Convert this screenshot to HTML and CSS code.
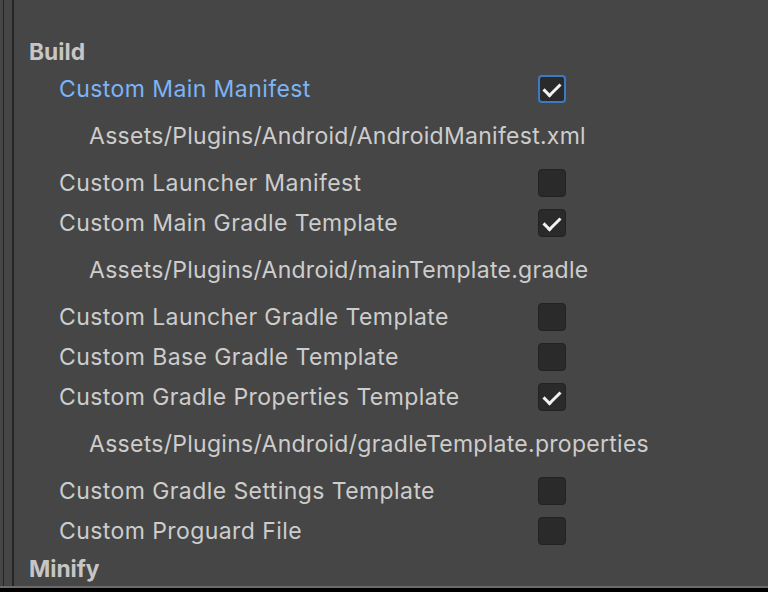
FILE: index.html
```html
<!DOCTYPE html>
<html lang="en">
<head>
    <meta charset="UTF-8">
    <meta name="viewport" content="width=device-width, initial-scale=1.0">
    <title>Publishing Settings - Build</title>
    <link rel="stylesheet" href="styles.css">
</head>
<body>
    <div class="app">
        <div class="rail"></div>
        <div class="inspector">
            <div class="section-title">Build</div>

            <div class="row focused">
                <span class="label">Custom Main Manifest</span>
                <span class="toggle checked"></span>
            </div>
            <div class="path">Assets/Plugins/Android/AndroidManifest.xml</div>

            <div class="row">
                <span class="label">Custom Launcher Manifest</span>
                <span class="toggle"></span>
            </div>
            <div class="row">
                <span class="label">Custom Main Gradle Template</span>
                <span class="toggle checked"></span>
            </div>
            <div class="path">Assets/Plugins/Android/mainTemplate.gradle</div>

            <div class="row">
                <span class="label">Custom Launcher Gradle Template</span>
                <span class="toggle"></span>
            </div>
            <div class="row">
                <span class="label">Custom Base Gradle Template</span>
                <span class="toggle"></span>
            </div>
            <div class="row">
                <span class="label">Custom Gradle Properties Template</span>
                <span class="toggle checked"></span>
            </div>
            <div class="path">Assets/Plugins/Android/gradleTemplate.properties</div>

            <div class="row">
                <span class="label">Custom Gradle Settings Template</span>
                <span class="toggle"></span>
            </div>
            <div class="row">
                <span class="label">Custom Proguard File</span>
                <span class="toggle"></span>
            </div>

            <div class="section-title">Minify</div>
        </div>
    </div>
</body>
</html>
```

FILE: styles.css
```css
body {
    margin: 0;
    background-color: #000;
    font-family: "Inter", "Noto Sans", sans-serif;
    overflow: hidden;
}

.app {
    display: flex;
    height: 586px;
    padding-left: 3px;
    background-color: #464646;
    border-bottom: 2px solid #6b6b6b;
    overflow: hidden;
}

/* dark double rule on the left edge */
.rail {
    width: 8px;
    border-left: 1px solid #252525;
    border-right: 2px solid #252525;
    flex-shrink: 0;
}

.inspector {
    flex-grow: 1;
    padding-top: 34px;
    padding-left: 15px;
}

.section-title {
    height: 35px;
    line-height: 35px;
    font-size: 22.8px;
    font-weight: 700;
    color: #c6c6c6;
}

.row {
    display: grid;
    grid-template-columns: 479px 28px;
    align-items: center;
    height: 40px;
    padding-left: 30px;
}

.label {
    font-size: 23px;
    letter-spacing: 0.42px;
    color: #cdcdcd;
    white-space: nowrap;
}

.focused .label {
    color: #7cb4f6;
}

.path {
    height: 54px;
    line-height: 54px;
    padding-left: 60px;
    font-size: 23px;
    letter-spacing: 0.28px;
    color: #cdcdcd;
    white-space: nowrap;
}

.toggle {
    position: relative;
    width: 28px;
    height: 28px;
    box-sizing: border-box;
    border: 1px solid #222;
    border-radius: 4px;
    background-color: #2a2a2a;
}

.focused .toggle {
    border: 2px solid #3b7bc2;
}

/* check mark drawn with two borders */
.toggle.checked::after {
    content: "";
    position: absolute;
    left: 50%;
    top: 45%;
    width: 14px;
    height: 7px;
    border-left: 3px solid #f2f2f2;
    border-bottom: 3px solid #f2f2f2;
    transform: translate(-50%, -50%) rotate(-45deg);
}
```
